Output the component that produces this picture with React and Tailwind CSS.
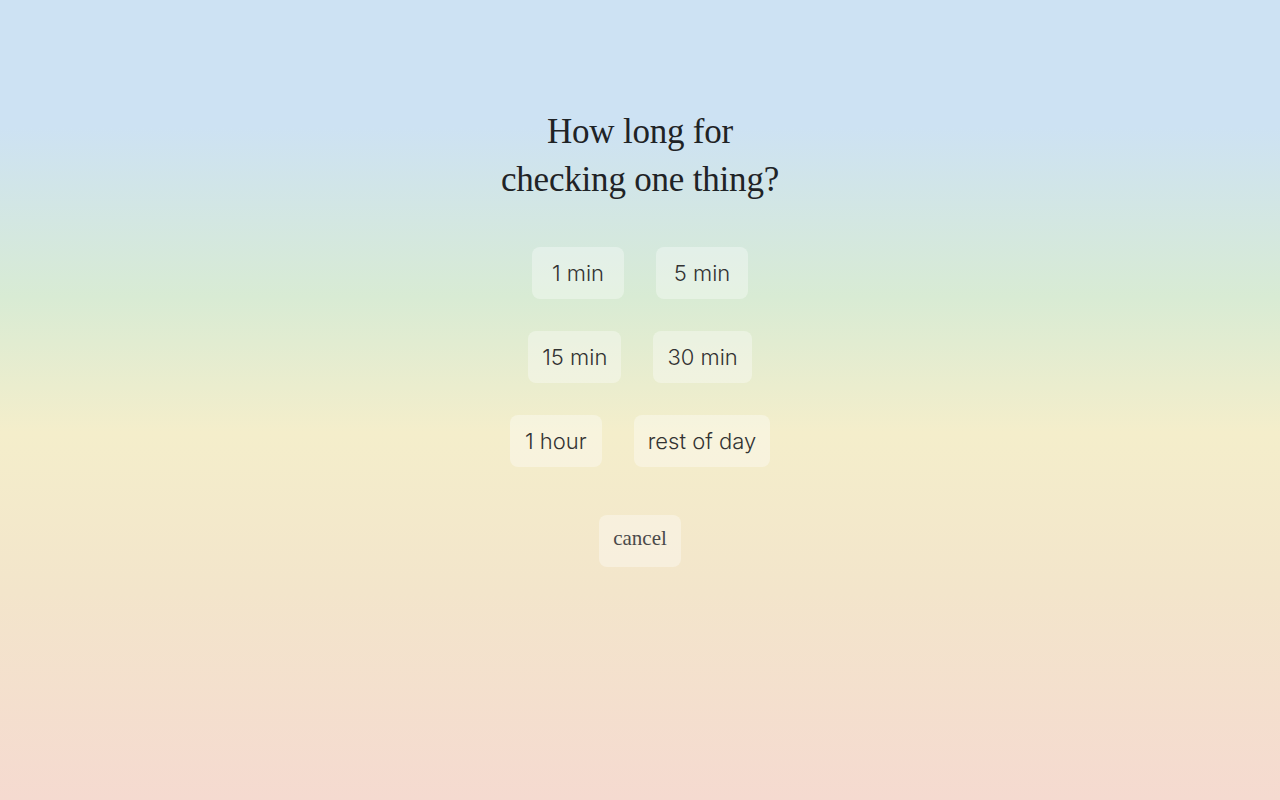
export default function App() {
  const rows = [
    ["1 min", "5 min"],
    ["15 min", "30 min"],
    ["1 hour", "rest of day"],
  ];
  return (
    <div
      className="w-full min-h-screen h-[800px] flex flex-col items-center bg-[linear-gradient(to_bottom,#cde2f3_0%,#cde2f3_16%,#d8ebd4_37%,#f4eecb_54%,#f3e5cb_74%,#f5dad0_100%)]"
    >
      <h1
        className="mt-[108px] text-center text-[35px] leading-[48px] tracking-[-0.2px] text-[#1f2326]"
        style={{ fontFamily: '"Liberation Serif", "DejaVu Serif", serif' }}
      >
        How long for
        <br />
        checking one thing?
      </h1>
      <div className="mt-[43px] flex flex-col items-center gap-8">
        {rows.map((r, i) => (
          <div key={i} className="flex gap-8">
            {r.map((t) => (
              <button
                key={t}
                className="h-[52px] min-w-[92px] px-[14px] rounded-lg bg-white/35 text-[22px] font-light text-[#333333]"
                style={{ fontFamily: 'Inter, "Noto Sans", sans-serif' }}
              >
                {t}
              </button>
            ))}
          </div>
        ))}
      </div>
      <button
        className="mt-12 h-[52px] w-[82px] rounded-lg bg-white/35 text-[21px] pb-[4px] text-[#4a4a4a]"
        style={{ fontFamily: '"Liberation Serif", "DejaVu Serif", serif' }}
      >
        cancel
      </button>
    </div>
  );
}
